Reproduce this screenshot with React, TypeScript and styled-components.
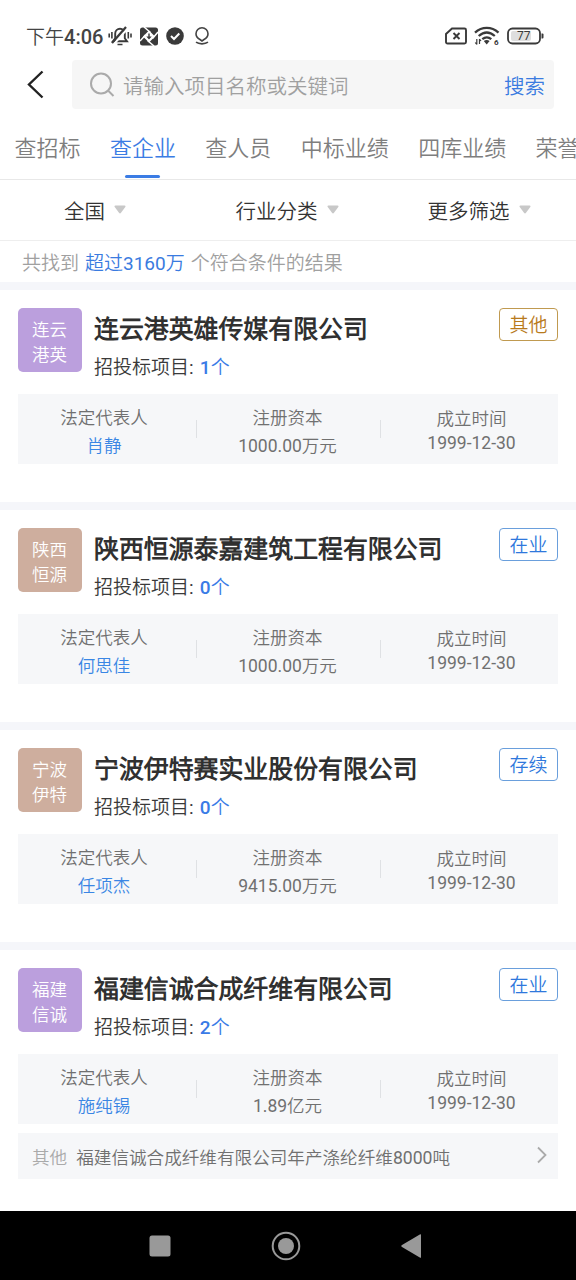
import React from "react";
import styled, { createGlobalStyle } from "styled-components";

const GlobalStyle = createGlobalStyle`
  * { box-sizing: border-box; }
  body {
    margin: 0;
    background: #fff;
    font-family: Roboto, "Noto Sans CJK SC DemiLight", "Noto Sans CJK SC Light", "Noto Sans CJK SC", sans-serif;
  }
`;

const Screen = styled.div`
  width: 576px;
  height: 1280px;
  display: flex;
  flex-direction: column;
  overflow: hidden;
  background: #fff;
  white-space: nowrap;
`;

const StatusBar = styled.div`
  height: 60px;
  padding: 12px 32px 0 26px;
  display: flex;
  align-items: flex-start;
  justify-content: space-between;
  flex-shrink: 0;
`;

const StatusGroup = styled.div`
  display: flex;
  align-items: center;
  height: 48px;
  svg { display: block; }
`;

const Clock = styled.div`
  width: 82px;
  padding-top: 2px;
  font-size: 19px;
  line-height: 24px;
  font-weight: 400;
  color: #444;
  span { font-size: 20px; font-weight: 500; }
`;

const SearchRow = styled.div`
  display: flex;
  height: 49px;
  padding-right: 22px;
  flex-shrink: 0;
`;

const BackButton = styled.div`
  width: 72px;
  padding: 10px 0 0 26px;
`;

const SearchBox = styled.div`
  flex: 1;
  display: flex;
  align-items: center;
  padding: 0 9px 0 17px;
  border-radius: 4px;
  background: #f6f6f6;
  font-size: 20.5px;
  line-height: 28px;
`;

const Placeholder = styled.span`
  flex: 1;
  margin-left: 8px;
  padding-top: 5px;
  color: #a0a0a0;
`;

const SearchAction = styled.span`
  padding-top: 5px;
  color: #3a7be0;
`;

const Tabs = styled.div`
  height: 71px;
  display: flex;
  gap: 29.4px;
  padding: 0 0 0 14.5px;
  border-bottom: 1px solid #e8e8e8;
  flex-shrink: 0;
  overflow: hidden;
`;

const Tab = styled.div<{ $active?: boolean }>`
  display: flex;
  flex-direction: column;
  align-items: center;
  justify-content: space-between;
  flex-shrink: 0;
  padding-top: 24px;
  font-size: 22px;
  line-height: 32px;
  color: ${(p) => (p.$active ? "#3b7ce4" : "#7e7e7e")};
  &::after {
    content: "";
    width: 35px;
    height: 3px;
    margin-bottom: 1px;
    border-radius: 2px;
    background: ${(p) => (p.$active ? "#3b7ce4" : "transparent")};
  }
`;

const Filters = styled.div`
  height: 61px;
  display: grid;
  grid-template-columns: repeat(3, 1fr);
  border-bottom: 1px solid #eee;
  flex-shrink: 0;
`;

const Filter = styled.div`
  display: flex;
  align-items: center;
  justify-content: center;
  padding: 4px 2px 0 0;
  font-size: 20.5px;
  line-height: 30px;
  color: #333;
  svg { margin: -6px 0 0 9px; }
`;

const ResultCount = styled.div`
  height: 41px;
  padding: 8px 0 0 22px;
  font-size: 19px;
  line-height: 30px;
  color: #a0a0a0;
  flex-shrink: 0;
  span { color: #3a7be0; margin: 0 6px; }
`;

const Card = styled.section`
  height: 220px;
  padding: 18px 18px 0;
  border-top: 8px solid #f5f6fa;
  flex-shrink: 0;
  &:last-of-type { height: 269px; }
`;

const CardHead = styled.div`
  height: 86px;
  display: flex;
  align-items: flex-start;
`;

const Logo = styled.div<{ $color: string }>`
  width: 64px;
  height: 64px;
  padding: 10px 14px 0;
  border-radius: 5px;
  background: ${(p) => p.$color};
  color: #fff;
  font-size: 17.5px;
  line-height: 25px;
  white-space: normal;
`;

const Heading = styled.div`
  flex: 1;
  margin-left: 12px;
`;

const CompanyName = styled.div`
  padding-top: 4px;
  font-size: 24.9px;
  line-height: 36px;
  font-weight: 700;
  color: #303030;
`;

const Projects = styled.div`
  padding-top: 6px;
  font-size: 19px;
  line-height: 28px;
  color: #3a3a3a;
  span { margin-left: 1.5px; color: #3a7be6; }
  b { font-weight: 500; }
`;

const Badge = styled.div<{ $color: string; $border: string }>`
  width: 59px;
  height: 33px;
  border: 1px solid ${(p) => p.$border};
  border-radius: 4px;
  font-size: 19px;
  line-height: 33px;
  text-align: center;
  color: ${(p) => p.$color};
`;

const Facts = styled.div`
  height: 70px;
  display: grid;
  grid-template-columns: 179px 184px 177px;
  background: #f6f7f9;
`;

const Fact = styled.div<{ $tight?: boolean }>`
  display: flex;
  align-items: center;
  justify-content: ${(p) => (p.$tight ? "flex-start" : "center")};
  text-align: center;
  font-size: 17.5px;
  line-height: ${(p) => (p.$tight ? 24 : 28)}px;
  color: #707070;
  & > div {
    flex: 1;
    padding: ${(p) => (p.$tight ? "4px 0 0 4px" : "5px 2px 0 0")};
  }
  &:first-child > div { padding-right: 6px; }
  &:not(:last-child)::after {
    content: "";
    width: 1px;
    height: 18px;
    background: #dfe1e4;
  }
`;

const Person = styled.div`
  color: #3a86e4;
`;

const ProjectRow = styled.div`
  height: 46px;
  margin-top: 9px;
  padding: 4px 10px 0 14px;
  display: flex;
  align-items: center;
  font-size: 17.6px;
  line-height: 28px;
  color: #707070;
  background: #f6f7f9;
  svg { margin: -6px 0 0 auto; }
`;

const ProjectKind = styled.span`
  margin-right: 9px;
  color: #aaa;
`;

const NavBar = styled.nav`
  height: 69px;
  display: flex;
  align-items: center;
  padding-left: 149px;
  background: #000;
  flex-shrink: 0;
`;

const MutedBell = () => (
  <svg width="24" height="20" viewBox="0 0 24 20" fill="none" stroke="#3a3a3a" strokeWidth="1.9">
    <path d="M5 15.300h14l-2.200-3V7.500a4.800 4.800 0 0 0-9.600 0v4.800z" />
    <path d="M5.500 18.500 19.500 2.500" stroke="#fff" strokeWidth="2" />
    <path d="M4 17 18 1" strokeWidth="2.200" />
    <path d="M9.500 18.500h5M1.200 7.500v4M3.900 6v6.500M20.300 6v6.500M23 7.500v4" strokeWidth="1.600" />
  </svg>
);

const AppMark = () => (
  <svg width="18" height="19" viewBox="0 0 18 19">
    <rect y=".5" width="18" height="18" rx="2.500" fill="#3a3a3a" />
    <path d="M9 3.500 15 9.500 9 15.500 3 9.500z" fill="#fff" />
    <path d="M4 0 10.500 5.500M18 5 12.500 11.500M14 19 7.500 13.500M0 14 5.500 8" stroke="#fff" strokeWidth="1.500" />
    <path d="M8.300 6.500h1.400v3h2L9 12.500 6.300 9.500h2z" fill="#3a3a3a" />
  </svg>
);

const CheckMark = () => (
  <svg width="18" height="18" viewBox="0 0 18 18">
    <circle cx="9" cy="9" r="8.800" fill="#3a3a3a" />
    <path d="m5 9 3 3 5.300-5.500" fill="none" stroke="#fff" strokeWidth="2" />
  </svg>
);

const PinMark = () => (
  <svg width="14" height="18" viewBox="0 0 14 18" fill="none" stroke="#444" strokeWidth="1.600">
    <path d="M5 12.500C2.500 11.200 1 9.300 1 6.800a6 6 0 0 1 12 0c0 2.500-1.500 4.400-4 5.700L7 14z" />
    <path d="M1 15.200c3 2.200 9 2.200 12 0" />
  </svg>
);

const NoSim = () => (
  <svg width="22" height="18" viewBox="0 0 22 18" fill="none" stroke="#3a3a3a" strokeWidth="1.900">
    <path d="M7 1.500h12.500a1.500 1.500 0 0 1 1.500 1.500v12a1.500 1.500 0 0 1-1.500 1.500h-17A1.500 1.500 0 0 1 1 15V7z" />
    <path d="m8.500 6 6 6M14.500 6l-6 6" />
  </svg>
);

const Wifi = () => (
  <svg width="26" height="20" viewBox="0 0 26 20" fill="none" stroke="#3a3a3a" strokeWidth="2.300">
    <path d="M1 6.600C8 .2 17.500.2 24.500 6.600M4.700 10C9.800 5.500 15.700 5.500 20.800 10M8.300 13.200c3-2.400 6-2.400 9 0" />
    <path d="m9.800 15 2.900 3.500 2.900-3.500c-2-1.300-3.800-1.300-5.800 0z" fill="#3a3a3a" stroke="none" />
    <path d="M2.800 18.500V13M1.200 16.500l1.600 2M5.500 13v5M5.500 13l1.500 2" strokeWidth="1.200" />
    <text x="20" y="19" fontSize="8" fontWeight="700" fill="#3a3a3a" stroke="none">6</text>
  </svg>
);

const Battery = () => (
  <svg width="37" height="18" viewBox="0 0 37 18">
    <rect x="4" y="4" width="20" height="10" rx="2" fill="#dedede" />
    <rect x="1" y="1.500" width="32" height="15" rx="4.500" fill="none" stroke="#3a3a3a" strokeWidth="1.800" />
    <path d="M34.500 6.500h1a1 1 0 0 1 1 1v3a1 1 0 0 1-1 1h-1z" fill="#3a3a3a" />
    <text x="16.700" y="13.300" textAnchor="middle" fontSize="12" fontWeight="400" fill="#3a3a3a">77</text>
  </svg>
);

const Caret = () => (
  <svg width="12" height="9" viewBox="0 0 12 9">
    <path d="M1.500.5h9c1 0 1.300.8.800 1.500L7 7.800a1.200 1.200 0 0 1-2 0L.7 2C.2 1.300.5.5 1.500.5z" fill="#c8c8c8" />
  </svg>
);

const Gap = styled.span<{ $w: number }>`
  width: ${(p) => p.$w}px;
  flex-shrink: 0;
`;

const StatusIcons = styled.div`
  display: flex;
  align-items: center;
  height: 48px;
`;

type Company = {
  logo: string;
  color: string;
  name: string;
  count: number;
  status: string;
  person: string;
  capital: string;
  project?: string;
};

const PURPLE = "#bb9fdd";
const TAN = "#ceae9e";

const companies: Company[] = [
  { logo: "连云港英", color: PURPLE, name: "连云港英雄传媒有限公司", count: 1, status: "其他", person: "肖静", capital: "1000.00万元" },
  { logo: "陕西恒源", color: TAN, name: "陕西恒源泰嘉建筑工程有限公司", count: 0, status: "在业", person: "何思佳", capital: "1000.00万元" },
  { logo: "宁波伊特", color: TAN, name: "宁波伊特赛实业股份有限公司", count: 0, status: "存续", person: "任项杰", capital: "9415.00万元" },
  { logo: "福建信诚", color: PURPLE, name: "福建信诚合成纤维有限公司", count: 2, status: "在业", person: "施纯锡", capital: "1.89亿元", project: "福建信诚合成纤维有限公司年产涤纶纤维8000吨" },
];

const tabs = ["查招标", "查企业", "查人员", "中标业绩", "四库业绩", "荣誉"];

const CompanyCard = ({ c }: { c: Company }) => {
  const other = c.status === "其他";
  return (
    <Card>
      <CardHead>
        <Logo $color={c.color}>
          {c.logo.slice(0, 2)}
          <br />
          {c.logo.slice(2)}
        </Logo>
        <Heading>
          <CompanyName>{c.name}</CompanyName>
          <Projects>
            招投标项目: <span><b>{c.count}</b>个</span>
          </Projects>
        </Heading>
        <Badge $color={other ? "#b87a1c" : "#2f78dc"} $border={other ? "#c09a50" : "#6a9fdc"}>
          {c.status}
        </Badge>
      </CardHead>
      <Facts>
        <Fact>
          <div>
            法定代表人
            <Person>{c.person}</Person>
          </div>
        </Fact>
        <Fact>
          <div>
            注册资本
            <br />
            {c.capital}
          </div>
        </Fact>
        <Fact $tight>
          <div>
            成立时间
            <br />
            1999-12-30
          </div>
        </Fact>
      </Facts>
      {c.project && (
        <ProjectRow>
          <ProjectKind>其他</ProjectKind>
          {c.project}
          <svg width="12" height="18" viewBox="0 0 12 18" fill="none" stroke="#aaa" strokeWidth="1.800">
            <path d="m2 1.500 7.500 7.500L2 16.500" />
          </svg>
        </ProjectRow>
      )}
    </Card>
  );
};

export default function App() {
  return (
    <>
      <GlobalStyle />
      <Screen>
        <StatusBar>
          <StatusGroup>
            <Clock>
              下午<span>4:06</span>
            </Clock>
            <MutedBell />
            <Gap $w={8} />
            <AppMark />
            <Gap $w={8} />
            <CheckMark />
            <Gap $w={11} />
            <PinMark />
          </StatusGroup>
          <StatusIcons>
            <NoSim />
            <Gap $w={7} />
            <Wifi />
            <Gap $w={7} />
            <Battery />
          </StatusIcons>
        </StatusBar>
        <SearchRow>
          <BackButton>
            <svg width="18" height="29" viewBox="0 0 18 29" fill="none" stroke="#222" strokeWidth="2.400">
              <path d="M16.500 1.500 3 14.500l13.500 13" />
            </svg>
          </BackButton>
          <SearchBox>
            <svg width="26" height="26" viewBox="0 0 26 26" fill="none" stroke="#aaa" strokeWidth="2">
              <circle cx="12" cy="11.500" r="10" />
              <path d="m19 18.500 5.500 5.500" />
            </svg>
            <Placeholder>请输入项目名称或关键词</Placeholder>
            <SearchAction>搜索</SearchAction>
          </SearchBox>
        </SearchRow>
        <Tabs>
          {tabs.map((t, i) => (
            <Tab key={t} $active={i === 1}>
              {t}
            </Tab>
          ))}
        </Tabs>
        <Filters>
          {["全国", "行业分类", "更多筛选"].map((f) => (
            <Filter key={f}>
              {f}
              <Caret />
            </Filter>
          ))}
        </Filters>
        <ResultCount>
          共找到<span>超过3160万</span>个符合条件的结果
        </ResultCount>
        {companies.map((c) => (
          <CompanyCard key={c.name} c={c} />
        ))}
        <NavBar>
          <svg width="22" height="22" viewBox="0 0 22 22">
            <rect x=".5" y=".5" width="21" height="21" rx="2.500" fill="#999" />
          </svg>
          <Gap $w={100} />
          <svg width="30" height="30" viewBox="0 0 30 30">
            <circle cx="15" cy="15" r="13.300" fill="none" stroke="#999" strokeWidth="2" />
            <circle cx="15" cy="15" r="8" fill="#999" />
          </svg>
          <Gap $w={99} />
          <svg width="22" height="26" viewBox="0 0 22 26">
            <path d="M21 2v22c0 1-.5 1-1.200.6L2 14c-1-.6-1-1.400 0-2L19.800 1.400C20.500 1 21 1 21 2z" fill="#999" />
          </svg>
        </NavBar>
      </Screen>
    </>
  );
}
